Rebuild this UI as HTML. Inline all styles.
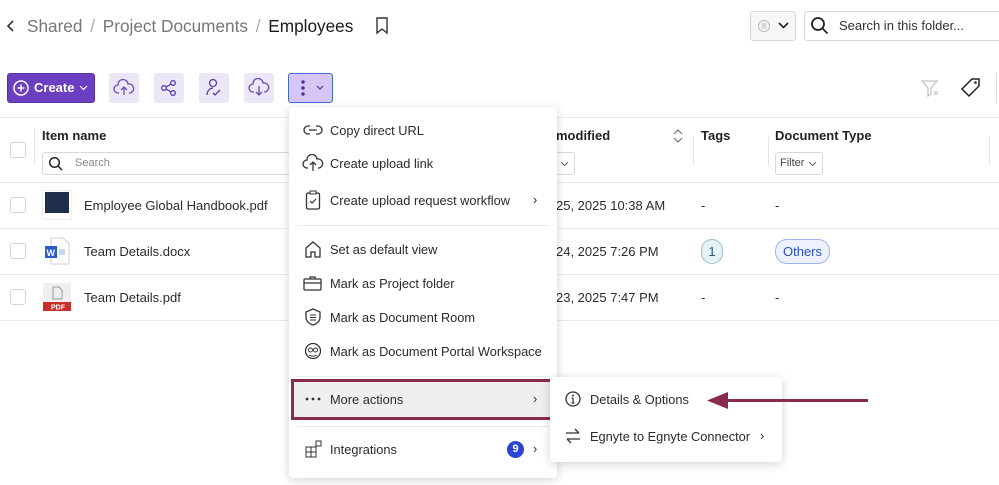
<!DOCTYPE html>
<html><head><meta charset="utf-8"><style>
*{box-sizing:border-box;margin:0;padding:0}
body{width:999px;height:485px;overflow:hidden;background:#fff;font-family:"Liberation Sans",sans-serif;color:#2b2b2b;position:relative}
.a{position:absolute}
.t{font-size:13px;white-space:nowrap}
.btn{position:absolute;top:73px;height:30px;width:30px;background:#ebe7f6;border-radius:3px}
.hl{position:absolute;height:1px;background:#ececec}
.cb{position:absolute;width:16px;height:16px;border:1px solid #d4d4d4;border-radius:3px;left:10px;background:#fff}
.mi{position:absolute;left:330px;font-size:12.8px;color:#2b2b2b;white-space:nowrap}
.ic{position:absolute}
</style></head><body>
<svg class="a" style="left:6px;top:19px" width="10" height="14"><path d="M7 2L2 7l5 5" stroke="#333" stroke-width="1.6" fill="none"/></svg>
<div class="a" style="left:27px;top:16px;font-size:17.2px;color:#777;white-space:nowrap">Shared <span style="color:#aaa;margin:0 3px">/</span> Project Documents <span style="color:#aaa;margin:0 3px">/</span> <span style="color:#1a1a1a">Employees</span></div>
<svg class="a" style="left:375px;top:17px" width="14" height="18"><path d="M2 1h10v15l-5-4-5 4z" stroke="#333" stroke-width="1.4" fill="none"/></svg>
<div class="a" style="left:750px;top:11px;width:46px;height:30px;border:1px solid #d6d6d6;border-radius:3px;background:#f7f7f7"></div>
<svg class="a" style="left:757px;top:18px" width="36" height="16"><circle cx="7" cy="8" r="5.5" stroke="#bbb" fill="none"/><path d="M4.5 6h5M4.5 8h5M4.5 10h5" stroke="#bbb"/><path d="M22 5l4.5 4.5L31 5" stroke="#222" stroke-width="1.6" fill="none"/></svg>
<div class="a" style="left:804px;top:11px;width:200px;height:30px;border:1px solid #d6d6d6;border-radius:3px"></div>
<svg class="a" style="left:810px;top:16px" width="20" height="20"><circle cx="8" cy="8" r="6" stroke="#222" stroke-width="1.8" fill="none"/><path d="M12.5 12.5l5 5" stroke="#222" stroke-width="1.8"/></svg>
<div class="a t" style="left:839px;top:18px;color:#333">Search in this folder...</div>
<div class="a" style="left:7px;top:73px;width:88px;height:30px;background:#6a3fc2;border-radius:3px;border:1px solid #5a32ad"></div>
<svg class="a" style="left:13px;top:80px" width="18" height="18"><circle cx="8" cy="8" r="7" stroke="#fff" stroke-width="1.5" fill="none"/><path d="M8 4.5v7M4.5 8h7" stroke="#fff" stroke-width="1.5"/></svg>
<div class="a" style="left:34px;top:80px;font-size:13px;font-weight:bold;color:#fff">Create</div>
<svg class="a" style="left:79px;top:84px" width="10" height="8"><path d="M1 2l3.5 3.5L8 2" stroke="#fff" stroke-width="1.2" fill="none"/></svg>
<div class="btn" style="left:109px"></div><div class="btn" style="left:154px"></div><div class="btn" style="left:199px"></div><div class="btn" style="left:244px"></div>
<svg class="a" style="left:113px;top:78px" width="22" height="20"><path d="M6 15H5a4 4 0 0 1 0-8 5 5 0 0 1 10-1 4 4 0 0 1 2 9h-1" stroke="#6b4bb5" stroke-width="1.3" fill="none"/><path d="M11 17V9M8 12l3-3 3 3" stroke="#6b4bb5" stroke-width="1.3" fill="none"/></svg>
<svg class="a" style="left:160px;top:79px" width="18" height="18"><circle cx="13" cy="4" r="2.3" stroke="#5b3ca8" stroke-width="1.3" fill="none"/><circle cx="4" cy="9" r="2.3" stroke="#5b3ca8" stroke-width="1.3" fill="none"/><circle cx="13" cy="14" r="2.3" stroke="#5b3ca8" stroke-width="1.3" fill="none"/><path d="M6 8l5-3M6 10l5 3" stroke="#5b3ca8" stroke-width="1.3"/></svg>
<svg class="a" style="left:204px;top:78px" width="20" height="20"><circle cx="9" cy="5" r="3.5" stroke="#5b3ca8" stroke-width="1.3" fill="none"/><path d="M3 17c0-4 3-7 6-7M9 15l2 2 5-5" stroke="#5b3ca8" stroke-width="1.3" fill="none"/></svg>
<svg class="a" style="left:248px;top:78px" width="22" height="20"><path d="M6 14H5a4 4 0 0 1 0-8 5 5 0 0 1 10-1 4 4 0 0 1 2 9h-1" stroke="#6b4bb5" stroke-width="1.3" fill="none"/><path d="M11 8v9M8 14l3 3 3-3" stroke="#6b4bb5" stroke-width="1.3" fill="none"/></svg>
<div class="a" style="left:288px;top:73px;width:45px;height:30px;background:#d5c6f6;border:1.5px solid #3f6fd6;border-radius:3px"></div>
<svg class="a" style="left:296px;top:79px" width="32" height="18"><circle cx="7" cy="3" r="1.7" fill="#4a2f95"/><circle cx="7" cy="9" r="1.7" fill="#4a2f95"/><circle cx="7" cy="15" r="1.7" fill="#4a2f95"/><path d="M21 7l3 3 3-3" stroke="#4a2f95" stroke-width="1.2" fill="none"/></svg>
<svg class="a" style="left:920px;top:78px" width="22" height="20"><path d="M2 3h15l-6 7v6l-3 2v-8z" stroke="#c4c4c4" stroke-width="1.3" fill="none"/><path d="M14 13l4 4M18 13l-4 4" stroke="#c4c4c4" stroke-width="1.2"/></svg>
<svg class="a" style="left:960px;top:77px" width="22" height="22"><path d="M12 2h7v7l-10 10-7-7z" stroke="#222" stroke-width="1.5" fill="none"/><circle cx="15.5" cy="5.5" r="1.3" fill="#222"/></svg>
<div class="a" style="left:996px;top:73px;width:1px;height:30px;background:#ddd"></div>
<div class="hl" style="left:0;top:117px;width:999px"></div>
<div class="cb" style="top:142px"></div>
<div class="a" style="left:34px;top:128px;width:1px;height:36px;background:#e6e6e6"></div>
<div class="a" style="left:42px;top:128px;font-size:13px;font-weight:bold;color:#222">Item name</div>
<div class="a" style="left:42px;top:152px;width:260px;height:23px;border:1px solid #d9d9d9;border-radius:3px"></div>
<svg class="a" style="left:48px;top:156px" width="16" height="16"><circle cx="6.5" cy="6.5" r="4.8" stroke="#222" stroke-width="1.5" fill="none"/><path d="M10 10l4 4" stroke="#222" stroke-width="1.5"/></svg>
<div class="a" style="left:75px;top:157px;font-size:11px;color:#888">Search</div>
<div class="a" style="left:556px;top:128px;font-size:13px;font-weight:bold;color:#222">modified</div>
<svg class="a" style="left:672px;top:128px" width="12" height="16"><path d="M2 6l4-4 4 4M2 10l4 4 4-4" stroke="#666" stroke-width="1.1" fill="none"/></svg>
<div class="a" style="left:540px;top:152px;width:35px;height:23px;border:1px solid #d9d9d9;border-radius:3px"></div>
<svg class="a" style="left:560px;top:160px" width="10" height="8"><path d="M1 2l3.5 3.5L8 2" stroke="#666" stroke-width="1" fill="none"/></svg>
<div class="a" style="left:693px;top:136px;width:1px;height:30px;background:#e6e6e6"></div>
<div class="a" style="left:701px;top:128px;font-size:13px;font-weight:bold;color:#222">Tags</div>
<div class="a" style="left:768px;top:136px;width:1px;height:30px;background:#e6e6e6"></div>
<div class="a" style="left:775px;top:128px;font-size:13px;font-weight:bold;color:#222">Document Type</div>
<div class="a" style="left:775px;top:152px;width:48px;height:23px;border:1px solid #d9d9d9;border-radius:3px"></div>
<div class="a" style="left:780px;top:157px;font-size:11px;color:#444">Filter</div>
<svg class="a" style="left:808px;top:160px" width="10" height="8"><path d="M1 2l3.5 3.5L8 2" stroke="#666" stroke-width="1" fill="none"/></svg>
<div class="a" style="left:989px;top:136px;width:1px;height:30px;background:#e6e6e6"></div>
<div class="hl" style="left:0;top:182px;width:999px"></div>
<div class="hl" style="left:0;top:228px;width:999px"></div>
<div class="hl" style="left:0;top:274px;width:999px"></div>
<div class="hl" style="left:0;top:320px;width:999px"></div>
<div class="cb" style="top:197px"></div><div class="cb" style="top:243px"></div><div class="cb" style="top:289px"></div>
<div class="a" style="left:42px;top:190px;width:30px;height:30px;border:1px solid #eee;border-radius:2px;background:#fff"><div style="margin:1px 2px;height:21px;background:#1f2e48"></div></div>
<svg class="a" style="left:42px;top:236px" width="30" height="30"><path d="M9 2h12l6 6v20H9z" fill="#fff" stroke="#ccc"/><rect x="3" y="10" width="12" height="12" fill="#2b5bc7"/><text x="4.5" y="20" font-size="9" font-weight="bold" fill="#fff" font-family="Liberation Sans">W</text><rect x="17" y="13" width="6" height="6" fill="#c8d5f0"/></svg>
<svg class="a" style="left:42px;top:283px" width="30" height="30"><rect x="1" y="0" width="28" height="28" fill="#efefef"/><path d="M11 4h6l3 3v9h-9z" stroke="#999" fill="none"/><rect x="1" y="19" width="28" height="9" fill="#c9302c"/><text x="9" y="26.5" font-size="7" font-weight="bold" fill="#fff" font-family="Liberation Sans">PDF</text></svg>
<div class="a t" style="left:84px;top:198px">Employee Global Handbook.pdf</div>
<div class="a t" style="left:84px;top:244px">Team Details.docx</div>
<div class="a t" style="left:84px;top:290px">Team Details.pdf</div>
<div class="a t" style="left:556px;top:198px">25, 2025 10:38 AM</div>
<div class="a t" style="left:556px;top:244px">24, 2025 7:26 PM</div>
<div class="a t" style="left:556px;top:290px">23, 2025 7:47 PM</div>
<div class="a t" style="left:701px;top:198px">-</div><div class="a t" style="left:775px;top:198px">-</div>
<div class="a t" style="left:701px;top:290px">-</div><div class="a t" style="left:775px;top:290px">-</div>
<div class="a" style="left:701px;top:239px;width:22px;height:25px;border:1px solid #9cc0cf;background:#e6f2f7;border-radius:11px;font-size:13px;text-align:center;line-height:23px;color:#2a5a70">1</div>
<div class="a" style="left:775px;top:239px;width:55px;height:25px;border:1px solid #9fb3ef;background:#eef2fe;border-radius:12px;font-size:13px;text-align:center;line-height:23px;color:#2a4fc4">Others</div>
<div class="a" style="left:289px;top:107px;width:268px;height:371px;background:#fff;border-radius:4px;box-shadow:0 2px 10px rgba(0,0,0,.18)"></div>
<div class="hl" style="left:297px;top:225px;width:252px"></div>
<div class="hl" style="left:297px;top:376px;width:252px"></div>
<div class="hl" style="left:297px;top:426px;width:252px"></div>
<div class="a" style="left:291px;top:379px;width:262px;height:41px;background:#efefef;border:3px solid #8a2a4d"></div>
<svg class="ic" style="left:303px;top:123px" width="20" height="14"><path d="M7 3H5a4 4 0 0 0 0 8h2M13 3h2a4 4 0 0 1 0 8h-2M6 7h8" stroke="#333" stroke-width="1.3" fill="none"/></svg>
<div class="mi" style="top:123px">Copy direct URL</div>
<svg class="ic" style="left:302px;top:154px" width="22" height="18"><path d="M6 14H5a4 4 0 0 1 0-8 5 5 0 0 1 10-1 4 4 0 0 1 2 9h-1" stroke="#333" stroke-width="1.3" fill="none"/><path d="M11 17V8M8 11l3-3 3 3" stroke="#333" stroke-width="1.3" fill="none"/></svg>
<div class="mi" style="top:156px">Create upload link</div>
<svg class="ic" style="left:305px;top:190px" width="16" height="20"><rect x="1.5" y="3" width="13" height="16" rx="1.5" stroke="#333" stroke-width="1.3" fill="none"/><rect x="5" y="1" width="6" height="3" stroke="#333" fill="#fff"/><path d="M5 11l2 2 4-4" stroke="#333" stroke-width="1.2" fill="none"/></svg>
<div class="mi" style="top:193px">Create upload request workflow</div>
<div class="mi" style="left:533px;top:192px">›</div>
<svg class="ic" style="left:304px;top:240px" width="18" height="18"><path d="M2 8L9 2l7 6v9h-5v-5H7v5H2z" stroke="#333" stroke-width="1.3" fill="none"/></svg>
<div class="mi" style="top:242px">Set as default view</div>
<svg class="ic" style="left:303px;top:275px" width="20" height="16"><rect x="1" y="4" width="17" height="11" rx="1" stroke="#333" stroke-width="1.3" fill="none"/><path d="M7 4V2h5v2M1 8h17" stroke="#333" stroke-width="1.3" fill="none"/></svg>
<div class="mi" style="top:276px">Mark as Project folder</div>
<svg class="ic" style="left:304px;top:308px" width="18" height="18"><path d="M9 1l7 3v5c0 4-3 7-7 8-4-1-7-4-7-8V4z" stroke="#333" stroke-width="1.3" fill="none"/><path d="M6 7h6M6 9.5h6M6 12h6" stroke="#333"/></svg>
<div class="mi" style="top:310px">Mark as Document Room</div>
<svg class="ic" style="left:304px;top:342px" width="18" height="18"><circle cx="9" cy="9" r="7.5" stroke="#333" stroke-width="1.3" fill="none"/><circle cx="6.5" cy="8" r="2" stroke="#333" fill="none"/><circle cx="11.5" cy="8" r="2" stroke="#333" fill="none"/><path d="M5 13c2 1.5 6 1.5 8 0" stroke="#333" fill="none"/></svg>
<div class="mi" style="top:344px">Mark as Document Portal Workspace</div>
<svg class="ic" style="left:304px;top:396px" width="18" height="6"><circle cx="3" cy="3" r="1.4" fill="#333"/><circle cx="9" cy="3" r="1.4" fill="#333"/><circle cx="15" cy="3" r="1.4" fill="#333"/></svg>
<div class="mi" style="top:392px">More actions</div>
<div class="mi" style="left:533px;top:391px">›</div>
<svg class="ic" style="left:305px;top:440px" width="18" height="18"><rect x="1" y="7" width="5" height="5" stroke="#333" fill="none"/><rect x="6" y="7" width="5" height="5" stroke="#333" fill="none"/><rect x="1" y="12" width="5" height="5" stroke="#333" fill="none"/><rect x="6" y="12" width="5" height="5" stroke="#333" fill="none"/><rect x="11" y="1" width="5" height="5" stroke="#333" fill="none"/></svg>
<div class="mi" style="top:442px">Integrations</div>
<div class="a" style="left:507px;top:441px;width:17px;height:17px;border-radius:50%;background:#2a46d1;color:#fff;font-size:11px;font-weight:bold;text-align:center;line-height:17px">9</div>
<div class="mi" style="left:533px;top:441px">›</div>
<div class="a" style="left:550px;top:377px;width:232px;height:85px;background:#fff;border-radius:4px;box-shadow:0 2px 10px rgba(0,0,0,.18)"></div>
<svg class="ic" style="left:564px;top:390px" width="18" height="18"><circle cx="9" cy="9" r="7" stroke="#333" stroke-width="1.3" fill="none"/><path d="M9 8v5M7.5 13h3M7.5 8H9" stroke="#333" stroke-width="1.2"/><circle cx="9" cy="5.5" r="1" fill="#333"/></svg>
<div class="mi" style="left:590px;top:392px">Details &amp; Options</div>
<svg class="ic" style="left:564px;top:427px" width="18" height="18"><path d="M2 6h13M11 2l4 4M16 12H3M7 16l-4-4" stroke="#333" stroke-width="1.3" fill="none"/></svg>
<div class="mi" style="left:590px;top:429px">Egnyte to Egnyte Connector</div>
<div class="mi" style="left:760px;top:428px">›</div>
<svg class="a" style="left:700px;top:388px" width="170" height="26"><path d="M22 12.5H168" stroke="#8a2a4d" stroke-width="3"/><path d="M7 12.5L28 4v17z" fill="#8a2a4d"/></svg>
</body></html>
